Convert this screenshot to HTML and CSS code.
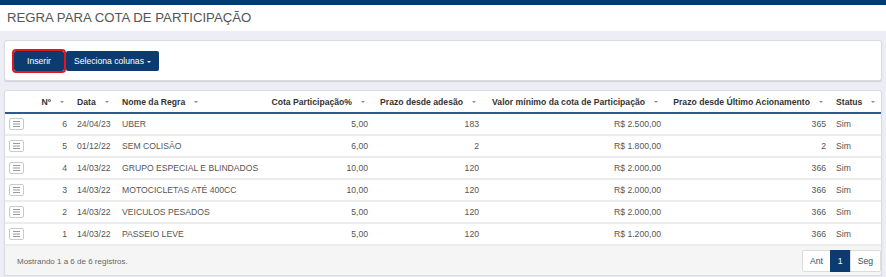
FILE: index.html
```html
<!DOCTYPE html>
<html>
<head>
	<title>Regra para Cota de Participação</title>
	<link rel="stylesheet" href="styles.css">
</head>
<body>

	<div class="topbar"></div>
	<h1 class="page-title">REGRA PARA COTA DE PARTICIPAÇÃO</h1>

	<div class="content">
		<div class="card toolbar">
			<button class="btn btn-insert">Inserir</button>
			<button class="btn btn-columns">Seleciona colunas <span class="caret"></span></button>
		</div>

		<div class="card">
			<table class="grid">
				<colgroup>
					<col style="width:25px">
					<col style="width:42px">
					<col style="width:45px">
					<col style="width:148px">
					<col style="width:108px">
					<col style="width:111px">
					<col style="width:182px">
					<col style="width:165px">
					<col style="width:50px">
				</colgroup>
				<thead>
					<tr>
						<th></th>
						<th class="num">Nº<span class="sort"></span></th>
						<th>Data<span class="sort"></span></th>
						<th>Nome da Regra<span class="sort"></span></th>
						<th class="num">Cota Participação%<span class="sort"></span></th>
						<th class="num">Prazo desde adesão<span class="sort"></span></th>
						<th class="num">Valor mínimo da cota de Participação<span class="sort"></span></th>
						<th class="num">Prazo desde Último Acionamento<span class="sort"></span></th>
						<th>Status<span class="sort"></span></th>
					</tr>
				</thead>
				<tbody>
					<tr>
						<td class="icon"><span class="row-btn"><svg width="13" height="10" viewBox="0 0 13 10"><path d="M3 2.5h7M3 5h7M3 7.5h7" stroke="#9a9a9a" stroke-width="1"/></svg></span></td>
						<td class="num">6</td>
						<td>24/04/23</td>
						<td>UBER</td>
						<td class="num">5,00</td>
						<td class="num">183</td>
						<td class="num">R$ 2.500,00</td>
						<td class="num">365</td>
						<td>Sim</td>
					</tr>
					<tr>
						<td class="icon"><span class="row-btn"><svg width="13" height="10" viewBox="0 0 13 10"><path d="M3 2.5h7M3 5h7M3 7.5h7" stroke="#9a9a9a" stroke-width="1"/></svg></span></td>
						<td class="num">5</td>
						<td>01/12/22</td>
						<td>SEM COLISÃO</td>
						<td class="num">6,00</td>
						<td class="num">2</td>
						<td class="num">R$ 1.800,00</td>
						<td class="num">2</td>
						<td>Sim</td>
					</tr>
					<tr>
						<td class="icon"><span class="row-btn"><svg width="13" height="10" viewBox="0 0 13 10"><path d="M3 2.5h7M3 5h7M3 7.5h7" stroke="#9a9a9a" stroke-width="1"/></svg></span></td>
						<td class="num">4</td>
						<td>14/03/22</td>
						<td>GRUPO ESPECIAL E BLINDADOS</td>
						<td class="num">10,00</td>
						<td class="num">120</td>
						<td class="num">R$ 2.000,00</td>
						<td class="num">366</td>
						<td>Sim</td>
					</tr>
					<tr>
						<td class="icon"><span class="row-btn"><svg width="13" height="10" viewBox="0 0 13 10"><path d="M3 2.5h7M3 5h7M3 7.5h7" stroke="#9a9a9a" stroke-width="1"/></svg></span></td>
						<td class="num">3</td>
						<td>14/03/22</td>
						<td>MOTOCICLETAS ATÉ 400CC</td>
						<td class="num">10,00</td>
						<td class="num">120</td>
						<td class="num">R$ 2.000,00</td>
						<td class="num">366</td>
						<td>Sim</td>
					</tr>
					<tr>
						<td class="icon"><span class="row-btn"><svg width="13" height="10" viewBox="0 0 13 10"><path d="M3 2.5h7M3 5h7M3 7.5h7" stroke="#9a9a9a" stroke-width="1"/></svg></span></td>
						<td class="num">2</td>
						<td>14/03/22</td>
						<td>VEICULOS PESADOS</td>
						<td class="num">5,00</td>
						<td class="num">120</td>
						<td class="num">R$ 2.000,00</td>
						<td class="num">366</td>
						<td>Sim</td>
					</tr>
					<tr>
						<td class="icon"><span class="row-btn"><svg width="13" height="10" viewBox="0 0 13 10"><path d="M3 2.5h7M3 5h7M3 7.5h7" stroke="#9a9a9a" stroke-width="1"/></svg></span></td>
						<td class="num">1</td>
						<td>14/03/22</td>
						<td>PASSEIO LEVE</td>
						<td class="num">5,00</td>
						<td class="num">120</td>
						<td class="num">R$ 1.200,00</td>
						<td class="num">366</td>
						<td>Sim</td>
					</tr>
				</tbody>
			</table>

			<div class="grid-footer">
				<span class="info">Mostrando 1 a 6 de 6 registros.</span>
				<div class="pagination">
					<span class="page">Ant</span>
					<span class="page active">1</span>
					<span class="page">Seg</span>
				</div>
			</div>
		</div>
	</div>

</body>
</html>
```

FILE: styles.css
```css
*{
	box-sizing: border-box;
}
body{
	margin: 0;
	background-color: #ededf5;
	font-family: "Liberation Sans", Arial, sans-serif;
}
.topbar{
	height: 5px;
	background-color: #063a74;
}
.page-title{
	margin: 0;
	height: 26px;
	line-height: 26px;
	padding-left: 7px;
	background-color: #fff;
	font-size: 13.2px;
	font-weight: normal;
	color: #555;
}
.content{
	padding: 9px 4px 0;
}
.card{
	background-color: #fff;
	border: 1px solid #dadae2;
	border-radius: 3px;
	box-shadow: 0 1px 1px rgba(0,0,0,0.12);
	overflow: hidden;
}
.toolbar{
	display: flex;
	gap: 2px;
	padding: 10px 9px 9px;
	margin-bottom: 9px;
	overflow: visible;
}
.btn{
	height: 20px;
	border: none;
	border-radius: 2px;
	background-color: #0b3b70;
	color: #fff;
	font-family: inherit;
	font-size: 8.65px;
	cursor: pointer;
}
.btn-insert{
	padding: 0 13px;
	outline: 2px solid #e3161b;
}
.btn-columns{
	padding: 0 8px;
}
.caret{
	display: inline-block;
	vertical-align: middle;
	margin-left: 1px;
	border-left: 2px solid transparent;
	border-right: 2px solid transparent;
	border-top: 2px solid #fff;
}

.grid{
	width: 100%;
	table-layout: fixed;
	border-collapse: separate;
	border-spacing: 0;
	font-size: 8.65px;
}
.grid th{
	padding: 4.5px 5px;
	line-height: 12px;
	text-align: left;
	font-weight: bold;
	color: #333;
	white-space: nowrap;
	border-bottom: 2px solid #2b5a8e;
}
.grid td{
	padding: 4px 5px;
	line-height: 12px;
	color: #555;
	white-space: nowrap;
	border-bottom: 2px solid #ececec;
}
.grid .num{
	text-align: right;
}
.sort{
	display: inline-block;
	vertical-align: middle;
	margin: 0 3px 0 9px;
	border-left: 2px solid transparent;
	border-right: 2px solid transparent;
	border-top: 2px solid #8a8a8a;
}
.grid td.icon{
	padding: 4px 0 4px 4px;
}
.row-btn{
	display: flex;
	align-items: center;
	justify-content: center;
	width: 15px;
	height: 12px;
	border: 1px solid #c9c9c9;
	border-radius: 2px;
	background-color: #fff;
}

.grid-footer{
	display: flex;
	justify-content: space-between;
	align-items: center;
	padding: 4px 0 3px 12px;
	background-color: #f5f5f5;
}
.info{
	font-size: 8px;
	color: #666;
}
.pagination{
	display: flex;
}
.page{
	height: 22px;
	line-height: 20px;
	padding: 0 7px;
	margin-left: -1px;
	border: 1px solid #dcdcdc;
	background-color: #fff;
	color: #2d4e72;
	font-size: 8.65px;
}
.page:first-child{
	border-radius: 2px 0 0 2px;
}
.page:last-child{
	border-radius: 0 2px 2px 0;
}
.page.active{
	background-color: #0b3b70;
	border-color: #0b3b70;
	color: #fff;
}
```
